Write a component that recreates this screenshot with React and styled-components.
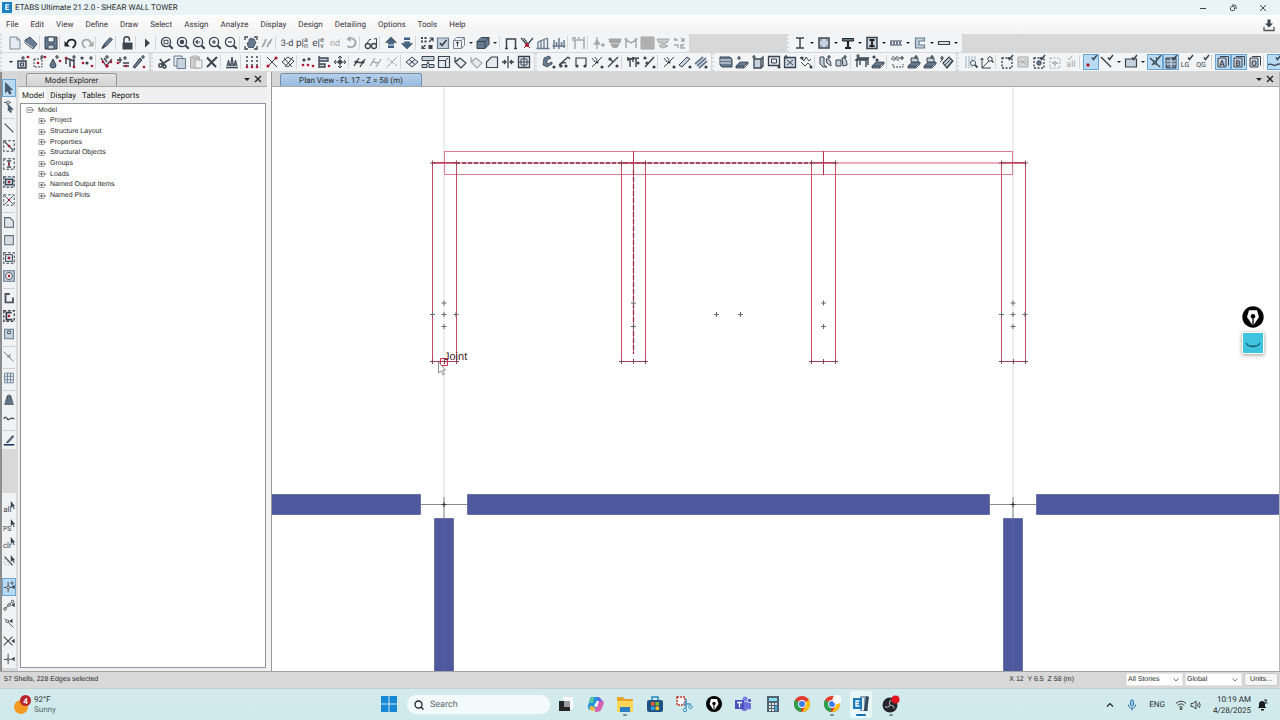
import React from "react";
import styled, { createGlobalStyle, css } from "styled-components";

const ui = `Roboto, "Noto Sans", sans-serif`;
const classic = `"Liberation Sans", Arial, sans-serif`;

const GlobalStyle = createGlobalStyle`
  *, *::before, *::after { box-sizing: border-box; }
  body { margin: 0; background: #d8d8d8; color: #2b2b2b; font-family: ${ui}; font-size: 8px; text-rendering: geometricPrecision; }
  button, select, input { font: inherit; color: inherit; margin: 0; text-rendering: inherit; }
  button { border: 0; padding: 0; background: none; }
`;

/* ---------- icon drawings, all on a 16 x 16 grid ---------- */

const INK = "#3b4550";
const STEEL = "#667b91";
const PALE = "#c6d2de";
const RED = "#b01830";

const tick = <path d="M9 3.5l1.500 2L14 1" stroke={INK} strokeWidth="1.500" />;
const plus = (x, y) => <path d={`M${x - 2} ${y}h4M${x} ${y - 2}v4`} stroke={INK} strokeWidth="1.200" />;
const dot = (x, y, r = 1.3, c = RED) => <circle cx={x} cy={y} r={r} fill={c} stroke="none" />;
const knob = (x, y) => <circle cx={x} cy={y} r="1.600" fill={INK} stroke="none" />;
const word = (t, size = 8, x = 8, y = 11) => (
  <text x={x} y={y} fontSize={size} textAnchor="middle" fill="currentColor" stroke="none" fontFamily={ui}>{t}</text>
);
const lens = (inner) => (
  <>
    <circle cx="7" cy="7" r="4.600" fill="#f2f5f8" strokeWidth="1.300" />
    <path d="M10.500 10.500l3.200 3.200" strokeWidth="2.200" />
    {inner}
  </>
);
const page = (l) => (
  <>
    <path d="M3 4h8v9H3z" fill={PALE} strokeWidth="1" stroke={INK} />
    <path d="M5 2.500h8.500v9" strokeWidth="1" stroke={INK} />
    <text x="7" y="11.500" fontSize="8" fontWeight="700" textAnchor="middle" fill={INK} stroke="none" fontFamily={ui}>{l}</text>
  </>
);
const arrowHead = <path d="M10 1v8l2-1.500 1.500 3 1-.5-1.500-3h2z" fill={INK} stroke="none" />;
const ball = <path d="M10.500 8l4-2.500v5z" fill={INK} stroke="none" />;
const slab = <path d="M2 12l4-4h8l-4 4zM2 12v2h8v-2M10 14l4-4V8" fill={STEEL} strokeWidth=".8" />;

const ICONS = {
  newFile: <path d="M3 2h7l3 3v9H3zM10 2v3h3" fill="#e4ebf2" stroke="#7f8c99" />,
  open: <><path d="M2 5l5-3 7 7-4 5-8-6z" fill={STEEL} strokeWidth=".8" /><path d="M2 7l8 6" stroke="#eee" strokeWidth=".8" /></>,
  save: <><path d="M2 2h12v12H2z" fill={STEEL} /><path d="M5 2h6v5H5z" fill="#eef2f5" /><path d="M5 10h6v4H5z" fill={PALE} /></>,
  undo: <><path d="M4 9c1-6 9-5.500 8.500-.5 0 2.500-2 3.500-3 4.500" strokeWidth="1.800" stroke="#222" /><path d="M1.500 6v5.500H7z" fill="#222" stroke="none" /></>,
  redo: <><path d="M12 9c-1-6-9-5.500-8.500-.5 0 2.500 2 3.500 3 4.500" strokeWidth="1.800" /><path d="M14.500 6v5.500H9z" fill="currentColor" stroke="none" /></>,
  pen: <><path d="M3 13.500l2-4.500 6-6.500 2.500 2-6 6.500z" fill={STEEL} strokeWidth=".8" /><path d="M3 13.500l3-3.500" strokeWidth="1.800" /></>,
  lock: <><rect x="4" y="8" width="9" height="6" fill="currentColor" /><path d="M5 8V4.500a2.700 2.700 0 0 1 5.400 0V6" strokeWidth="1.500" /></>,
  play: <path d="M6 3.500l5 4.500-5 4.500z" fill="currentColor" stroke="none" />,
  zoomBox: lens(<path d="M5 5.300h4v3.400H5z" strokeWidth="1" />),
  zoomAll: lens(<circle cx="7" cy="7" r="2.200" fill={INK} stroke="none" />),
  zoomBack: lens(<path d="M9.300 7h-4M6.700 5.200L5 7l1.700 1.800" strokeWidth="1.200" />),
  zoomIn: lens(<path d="M5 7h4M7 5v4" strokeWidth="1.200" />),
  zoomOut: lens(<path d="M5 7h4" strokeWidth="1.200" />),
  hand: <><path d="M2 5V2h3M11 2h3v3M14 11v3h-3M5 14H2v-3" strokeWidth="1.300" /><path d="M4 8l1.500 4.500h5L13 7l-1.300-.8V4.500h-1.400V3.800H9V3.300H7.500v1H6v3z" fill={STEEL} strokeWidth=".8" /></>,
  strides: <path d="M3 12l2-3 2-5M8 12l2-4 3-4M4 9h2M9 8h3" strokeWidth="1.700" />,
  t3d: word("3-d", 9),
  plan: <>{word("p|", 10, 5)}{word("a", 7, 11, 7)}{word("n", 7, 11, 13)}</>,
  elev: <>{word("e|", 10, 5)}{word("e", 7, 11, 7)}{word("v", 7, 11, 13)}</>,
  nd: word("nd", 9),
  rotate: <><path d="M6 4c4-2 7 1 6.500 4.500C12 12 7 13.500 4.500 11" strokeWidth="1.800" /><path d="M7.500 1v6L3.500 4z" fill="currentColor" stroke="none" /></>,
  glasses: <><circle cx="4.800" cy="11" r="2.500" strokeWidth="1.300" /><circle cx="11" cy="11" r="2.500" strokeWidth="1.300" /><path d="M2.500 10L7 4M13.500 10V3.500L11 4M7 4l1 1M7 10.500h2" /></>,
  up: <><path d="M8 2l5.500 5.500h-11z" fill="#3f6183" strokeWidth=".6" /><path d="M5 8h6v1.500H5zM5 10.500h6V13H5z" fill="#3f6183" stroke="none" /></>,
  down: <><path d="M8 14L2.500 8.500h11z" fill="#3f6183" strokeWidth=".6" /><path d="M5 6.500h6V8H5zM5 2.500h6V5H5z" fill="#3f6183" stroke="none" /></>,
  swap: <><path d="M2 2h2v2H2zM5.500 2h2v2h-2zM2 5.500h2v2H2zM5.500 5.500h2v2h-2zM9.500 10h4v4h-4z" fill={INK} stroke="none" /><path d="M10 7l4-4M10.500 3H14v3.500M3 13.500l3.500-3.500M3 10.500v3h3.500" strokeWidth="1.200" /></>,
  checkBox: <><path d="M2.500 3h11v10.500h-11z" fill={PALE} strokeWidth="1.200" stroke={STEEL} /><path d="M5 8l2 2.500L11.500 5" strokeWidth="1.700" /></>,
  cube: <><path d="M2.500 5.500h8v8h-8zM2.500 5.500l3-3h8l-3 3M13.500 2.500v8l-3 3" fill="#edf1f5" stroke="#778391" /><path d="M6.500 7v4.500M5 8l1.500-1L8 8" stroke={INK} /></>,
  solid: <path d="M2 6.500l4-4h8v7l-4 4H2zM2 6.500h8v7M10 6.500l4-4" fill={STEEL} />,
  portal: <path d="M3.500 13.500V4h9v9.500M2 13.500h3M11 13.500h3" strokeWidth="1.500" />,
  vee: <><path d="M2 3l6 7 6-7M4.500 3l4 5" strokeWidth="1.200" />{dot(8, 10, 2)}<path d="M5 13l3-3 3 3" stroke={RED} /></>,
  bars: <path d="M1.500 13.500h13M3 13V7M6 13V5M9 13V4M12.500 13V3M3 7l9.500-4" stroke={STEEL} strokeWidth="1.300" />,
  bars2: <path d="M1.500 11h13M3 14V5M5.500 12V7M8 14V3M10.500 12V7M13 13V5" stroke={STEEL} strokeWidth="1.500" />,
  portal2: <path d="M4 14V5h9v9M2 3h3M2 2v4M8 2v2M13 2v2" strokeWidth="1.500" />,
  addDown: <path d="M6 2v12M3.500 9L6 5l2.500 4zM10 10h4M12 8v4" strokeWidth="1.300" />,
  layers: <path d="M2 4h12l-1 4H3zM4 9.500h8l-2 3H6z" fill="currentColor" />,
  em: <path d="M3 13V5l5 3 5-3v8M1.500 4h3M11.500 4h3" strokeWidth="1.500" />,
  grayBox: <><path d="M2 2h13v12H2z" fill="#b4b4b4" /><path d="M5 5h3v3H5zM10 5h2M10 8h2M5 11h7" /></>,
  flag: <path d="M2 4h12l-2 4H4zM4 11l4-2 5 2-5 2z" fill="#c9c9c9" />,
  shuffle: <path d="M3 5h4M3 5l2-2M3 10h4v3M10 3l3 3M13 3v3h-3M10 12l3-3M10 9v4h4" strokeWidth="1.300" />,
  ibeam: <path d="M4 3h8M4 13h8M8 3v10" strokeWidth="1.500" />,
  colSq: <><path d="M3 3h10v10H3z" fill={PALE} strokeWidth="1.500" />{[[5, 5], [11, 5], [5, 11], [11, 11]].map(([x, y]) => <circle key={`${x}${y}`} cx={x} cy={y} r=".7" fill={INK} stroke="none" />)}</>,
  tee: <><path d="M2.500 3.500h11v2.500h-11z" fill={STEEL} stroke="#222" /><path d="M8 6v7M5 13h6" strokeWidth="2.200" stroke="#222" /></>,
  encased: <><path d="M3 2.500h10v11H3z" fill={PALE} strokeWidth="1.500" /><path d="M5.500 5h5M5.500 11h5M8 5v6" strokeWidth="1.800" stroke="#222" /></>,
  deck: <><path d="M2 6h12M2 10h12" strokeWidth="1" /><path d="M2 8h12" strokeWidth="3" strokeDasharray="2 1" stroke={STEEL} /></>,
  channel: <path d="M12.500 3h-9v10h9v-3H7V6h5.500z" fill={PALE} stroke={STEEL} strokeWidth="1.200" />,
  plate: <path d="M2.500 6.500h11v3h-11z" fill="#dbe1e6" strokeWidth="1.200" />,

  jointBox: <><path d="M3 7h8v7H3z" fill={PALE} strokeWidth="1.500" /><path d="M5.500 9h3v3h-3z" />{plus(8, 4)}{dot(13, 3)}</>,
  jointRect: <><path d="M3 5h8v8H3z" strokeDasharray="2 1" />{plus(11, 3)}{dot(7, 9)}{dot(14, 3)}</>,
  drop: <><path d="M6 5l3 6a3 3 0 1 1-6 0z" fill={STEEL} />{plus(10, 3)}{dot(13, 7)}</>,
  piers: <><path d="M3 4v6M7 6v7M11 5v8M3 4l8 3" strokeWidth="1.500" />{dot(3, 4)}{dot(11, 13)}{plus(11, 3)}</>,
  dots: <>{knob(3, 4)}{knob(8, 9)}{plus(12, 4)}{dot(13, 12)}{dot(4, 9)}</>,
  fan: <><path d="M2 4l5 8 6-7M5 4l3 4" strokeWidth="1.300" />{plus(8, 3)}{dot(4, 8)}{dot(8, 12, 1.7)}{dot(12, 8)}</>,
  level: <><path d="M2 6h5M8 12h6M8 9h6M5 3v6" strokeWidth="1.300" />{plus(10, 4)}{dot(3, 9)}{dot(11, 12)}</>,
  brush: <><path d="M2 13L9 4l2 2-7 8z" fill={STEEL} />{plus(12, 3)}{dot(13, 13)}</>,
  cut: <><circle cx="4.500" cy="11.500" r="1.700" strokeWidth="1.500" /><circle cx="8.500" cy="12.500" r="1.500" strokeWidth="1.500" /><path d="M5.500 10.500L14 5M8.500 11L4 5" strokeWidth="1.700" /></>,
  copy: <><path d="M2 2h8v10H2z" fill="#e7edf3" stroke={STEEL} /><path d="M5 4.500h8.500v10H5z" fill={PALE} stroke={STEEL} /></>,
  paste: <><path d="M2.500 3h9v11h-9z" fill="#d0d0d0" /><path d="M5 2h4v2H5zM7 6h7v8H7z" fill="#f0f0f0" /></>,
  del: <path d="M3 3.500l9 9.500M13 3L3 13" strokeWidth="2" />,
  towers: <><path d="M3 12l1.500-6L6 12M6.500 12l1.500-9 1.500 9M10 12l1.500-6 1.500 6" fill={STEEL} /><path d="M2 13.500h12" strokeWidth="1.500" /></>,
  gridDots: <><path d="M3 2v12M8 2v12M13 2v12" strokeDasharray="2 2" strokeWidth="1.500" />{dot(3, 13)}{dot(8, 13)}{dot(13, 13)}</>,
  crossLine: <><path d="M3 3l10 10M3 13L13 3" />{dot(4, 12, 1.6)}{dot(12, 4, 1.6)}</>,
  trim: <path d="M2 8l6-5 6 4-6 6zM5 13l8-10M4 4l8 9" />,
  spread: <>{knob(4, 6)}{knob(9, 5)}{dot(3, 11)}{dot(8, 11)}{dot(13, 12)}</>,
  align: <><path d="M3 2v12M3 4h9v3H3zM3 10h6v3H3z" fill={PALE} strokeWidth="1.300" />{dot(13, 12)}</>,
  move: <><path d="M8 2v12M2 8h12M6 4l2-2 2 2M6 12l2 2 2-2M4 6L2 8l2 2M12 6l2 2-2 2" /><circle cx="8" cy="8" r="1.800" fill={INK} /></>,
  lines: <><path d="M2 12l5-8M8 13l5-8M4 8l7 1" strokeWidth="1.300" />{knob(4, 8)}{knob(11, 8)}</>,
  linesG: <path d="M2 12l5-8M8 13l5-8M4 8l7 1" strokeWidth="1.300" />,
  pctG: <path d="M3 13L13 3M3 6l2-2M11 12l2-2M6 6l4 4" />,
  quad: <path d="M2 8l6-5 6 5-6 5zM5 5.500l6 5M5 10.500l6-5" fill="#e4eaf0" />,
  split: <><path d="M2 2.500h12v4H2zM2 10.500h5v3H2zM9 10.500h5v3H9z" fill={PALE} /><path d="M8 7v2.500M6.500 8.500L8 10l1.500-1.500" /></>,
  scale: <><path d="M2.500 2.500h11v11h-11zM2.500 6.500h7v7h-7z" fill="#e4eaf0" strokeWidth="1.200" /><path d="M10 6l2-2" /></>,
  turn: <path d="M3 8l5-4 6 5-5 5zM3 3v4h3" fill="#e4eaf0" strokeWidth="1.200" />,
  chamfer: <path d="M2.500 13.500V8l5-5h6v10.500z" fill="#e4eaf0" strokeWidth="1.200" />,
  mirror: <path d="M8 2v12M2 8h4M10 8h4M4 6l2 2-2 2M12 6l-2 2 2 2" strokeWidth="1.300" />,
  mesh: <><path d="M2.500 2.500h11v11h-11z" fill="#e4eaf0" strokeWidth="1.300" /><path d="M5 5h6v6H5zM8 2v12M2 8h12" /></>,
  sec: <><path d="M3 4l5-2 2 2-4 2v4l5-2v2l-5 3-4-2z" fill={STEEL} strokeWidth=".8" />{knob(13, 13)}</>,
  bow: <><path d="M2 11l9-8M3 13c0-4 3-5 6-4M11 3l2 2" strokeWidth="1.400" />{knob(4, 12)}{knob(9, 12)}</>,
  frameRel: <><path d="M3 12V4h10v8" strokeWidth="1.200" />{knob(4, 12)}{knob(12, 12)}</>,
  lineK: <><path d="M3 13L13 3M3 4l3 4M6 3l2 3" />{knob(8, 8)}{knob(13, 13)}</>,
  lineX: <><path d="M3 13L13 3M4 4l4 4" strokeWidth="1.400" />{knob(5, 5)}{knob(12, 12)}</>,
  stand: <><path d="M2 5l12-1M5 5v8M11 5v8M3 3v4M8 3v5" strokeWidth="1.400" />{knob(13, 9)}</>,
  pct: <><path d="M4 13L13 3" strokeWidth="1.400" />{knob(4, 4)}{knob(13, 13)}{knob(6, 9)}</>,
  ruler: <><path d="M2 11l8-8 3 2-8 8z" fill={PALE} />{knob(13, 13)}</>,
  tubes: <><path d="M2 10l8-7M4 12l9-8M6 14l8-7" strokeWidth="1.800" stroke={STEEL} />{knob(13, 13)}</>,
  stack: <><path d="M2 3h10l2 2v8H4l-2-2z" fill={STEEL} /><path d="M2 6h11M2 9h11" stroke="#e8edf2" strokeWidth="1.200" /></>,
  slabAdd: <>{slab}{plus(5, 4)}</>,
  wallAdd: <><path d="M4 5h7v9H4zM11 5l2-2v9l-2 2" fill={PALE} strokeWidth="1.300" />{plus(4, 3)}</>,
  openAdd: <><path d="M2.500 2.500h11v9h-11z" fill="#e4eaf0" strokeWidth="1.300" /><path d="M5.500 5h5v4h-5z" />{knob(13, 13)}</>,
  axes: <><path d="M2.500 3.500h11v10h-11z" fill={PALE} strokeWidth="1.300" /><path d="M5 6l6 5M5 11l6-5" />{plus(4, 3)}</>,
  scribble: <><path d="M2 3l4 4 2-4 3 4 2-2M3 8l4 4 3-3 4 4" />{knob(4, 4)}{knob(13, 13)}</>,
  shells: <><path d="M2 3h4v8l3 2H5l-3-3zM8 5c4 0 5 3 5 7l-4-3z" fill={PALE} />{plus(11, 3)}</>,
  shells2: <><path d="M2 6h5v6H2zM8 4c4 0 5 3 5 7l-4 1z" fill={PALE} />{plus(11, 3)}</>,
  table: <><path d="M2 6l2-2h10l-2 2zM3 6v7M12 6v7M14 4v7M6 7v4" fill={STEEL} strokeWidth="1.400" />{plus(4, 2)}</>,
  slabDot: <>{slab}{knob(4, 3)}{knob(7, 6)}</>,
  dims: <><path d="M2 3h3v3H2zM6 3h3v3H6zM3 10v3h10v-3" strokeDasharray="2 1" />{plus(12, 4)}</>,
  slabBox: <>{slab}<path d="M5 4h7v4H5z" fill={PALE} />{plus(10, 3)}</>,
  wedge: <><path d="M5 9l6-6 4 4-6 7z" fill={PALE} strokeWidth="1.200" /><path d="M7 11l6-6M9 13l5-6" />{plus(4, 4)}<path d="M2 8l3-3" /></>,
  findHatch: <><path d="M3 2v12M6 2v12M9 2v12M12 2v4" stroke="#b9c7d5" strokeWidth="1.500" /><circle cx="10" cy="9" r="2.500" fill="#fff" /><path d="M12 11l2.500 2.500" strokeWidth="1.800" /></>,
  findAxis: <><path d="M3 4v10h9M3 14l7-7M1.500 6L3 4l1.500 2" /><circle cx="11" cy="5" r="2.200" /><path d="M12.500 6.500l2 2" strokeWidth="1.500" /></>,
  selRect: <><path d="M3 4h10v10H3z" strokeDasharray="2 1.500" strokeWidth="1.400" />{tick}</>,
  selX: <><path d="M3 3h10v10H3z" fill="#ddd" /><path d="M5 5l6 6M11 5l-6 6M3 8h3M10 8h3" /></>,
  selDot: <><path d="M3 4h10v10H3z" strokeDasharray="2 1.500" strokeWidth="1.400" /><circle cx="8" cy="9" r="2.200" fill={STEEL} />{tick}</>,
  selDotG: <><path d="M3 4h10v10H3z" strokeDasharray="2 1.500" /><path d="M5 9h2M9 9h2M8 7v5" strokeWidth="1.500" /></>,
  allTick: <>{word("all", 9, 8, 13)}<path d="M5 4l1.500 1.500L9 2" /></>,
  ptTick: <>{dot(5, 11, 1.7)}{tick}</>,
  lnTick: <><path d="M2 3l10 10" strokeWidth="1.400" />{tick}</>,
  areaTick: <><path d="M2.500 5h11v8h-11z" fill={PALE} strokeWidth="1.200" />{tick}</>,
  snapLn: <><path d="M3 4l10 9M5 11l5-5" strokeWidth="1.300" /><circle cx="8" cy="8.500" r="1.700" fill={STEEL} />{tick}</>,
  snapGrid: <><path d="M3 4h10v10H3z" fill={STEEL} /><path d="M3 7h10M3 10h10M8 4v10" stroke="#dce8f2" />{tick}</>,
  lg: <>{word("LG", 7, 6, 13)}{tick}</>,
  qg: <>{word("QG", 7, 6, 13)}{tick}</>,
  a: page("A"), b: page("B"), o: page("O"),
  wave: <><path d="M1 11c3-3 5 2 8 0s4-1 6 0" strokeWidth="1.400" />{tick}</>,

  pointer: <path d="M4 2l8 8H8.500l2 4-2 1-2-4L4 13z" fill="#4b6078" strokeWidth=".8" />,
  reshape: <><path d="M2 4h8M6 4v3" /><circle cx="7" cy="4" r="1.600" fill="#fff" /><path d="M7 6l6 6h-3l1 3-1.500.5L8 12.500 7 14z" fill="#4b6078" strokeWidth=".5" /></>,
  line: <path d="M3 3l10 10" strokeWidth="1.300" />,
  rLine: <><path d="M2 2h12v12H2z" strokeDasharray="3 2" strokeWidth="1.200" /><path d="M3 3l10 10" strokeWidth="1.500" />{dot(8, 8, 1.5)}</>,
  rCol: <><path d="M2 2h12v12H2z" strokeDasharray="3 2" strokeWidth="1.200" /><path d="M5.500 4.500h5M5.500 11.500h5M8 4.500v7" strokeWidth="1.500" />{dot(8, 8)}</>,
  rBeams: <><path d="M2 2h12v12H2z" fill={PALE} strokeDasharray="3 2" strokeWidth="1.300" /><path d="M4 4v8M12 4v8M4 5h8M4 11h8" strokeWidth="1.500" />{dot(8, 8, 1.5)}</>,
  rBrace: <><path d="M2 2h12v12H2z" strokeDasharray="3 2" /><path d="M3 3l10 10M13 3L3 13" />{dot(8, 8)}</>,
  poly: <path d="M3 3h6l4 4v7H3z" fill="#dfe5ea" stroke="#55616d" strokeWidth="1.200" />,
  rect: <path d="M3 3h10v10.500H3z" fill="#d4dce4" stroke="#66727f" strokeWidth="1.200" />,
  areaPt: <><path d="M2 2h12v12H2z" strokeDasharray="3 2" strokeWidth="1.200" /><path d="M4 4h8v8H4z" fill={PALE} />{dot(8, 8, 1.5)}</>,
  circlePt: <><path d="M2 2h12v12H2z" fill={PALE} stroke={STEEL} strokeWidth="1.300" /><circle cx="8" cy="8" r="4" fill="#f2f5f8" />{dot(8, 8, 1.5)}</>,
  wallL: <path d="M9 3.500H4v9.500h8.500V7.500" stroke="#4c5560" strokeWidth="2.200" />,
  wallPt: <><path d="M2 2h12v12H2z" strokeDasharray="3 2" strokeWidth="1.500" /><path d="M11 4H5v8h7" strokeWidth="2" />{dot(8, 8, 1.5)}</>,
  door: <><path d="M3 2.500h10v11H3z" fill={PALE} stroke={STEEL} strokeWidth="1.200" /><path d="M6.500 4.500h3v3h-3z" fill="#eef2f5" /></>,
  link: <><path d="M2 3l11 11M6 9l4-3" stroke="#5e6874" /><circle cx="8" cy="8.500" r="1.600" fill="#8b97a3" stroke="none" /></>,
  gridBox: <path d="M3 2.500h10v11H3zM6.300 2.500v11M9.700 2.500v11M3 6h10M3 10h10" fill="#e9eef3" stroke={STEEL} />,
  tower: <path d="M6 3h4l3 10H3zM8 1.500v12M6.500 3L5.500 13M9.500 3l1 10" fill="#7b93a9" strokeWidth=".8" />,
  squiggle: <path d="M2 9c2-3 3-2 4 0s3 0 4-.5 2-.5 4 .5" strokeWidth="1.400" />,
  sketch: <><path d="M5 11l7-8 1.500 1-6.500 7z" fill={STEEL} /><path d="M2 13.500h12" strokeWidth="1.800" stroke="#203a66" /></>,
  all: <>{word("all", 9, 6, 14)}{arrowHead}</>,
  ps: <>{word("PS", 8, 6, 15)}{arrowHead}</>,
  clr: <>{word("clr", 9, 6, 14)}{arrowHead}</>,
  deselect: <><path d="M3 3l9 10" strokeWidth="1.500" /><path d="M2 6h5M2 9h7M3 12h6" stroke="#8ea6c2" strokeDasharray="1 1" />{arrowHead}</>,
  snapPt: <><path d="M7 2v12M2 8.500h9" /><circle cx="7" cy="8.500" r="1.500" fill="#fff" /><circle cx="11.500" cy="3.500" r="1.300" />{ball}</>,
  snapEnd: <><path d="M3 13l9-9" /><circle cx="3.500" cy="12.500" r="1.500" fill="#fff" /><circle cx="8" cy="8" r="1.500" fill="#fff" /><circle cx="12" cy="4" r="1.500" fill="#fff" />{ball}</>,
  snapMid: <><path d="M3 3l10 10" /><circle cx="6" cy="6" r="1.500" fill="#fff" /><path d="M8 6l4-3v5z" fill={INK} stroke="none" /></>,
  snapX: <><path d="M2 3l10 10M12 3L2 13" strokeWidth="1.200" />{ball}</>,
  snapPerp: <><path d="M7 2v12M2 8.500h9" /><circle cx="7" cy="8.500" r="1.200" fill="#fff" />{ball}</>,
};

const Glyph = styled.svg`
  display: block;
  width: 16px;
  height: 16px;
  fill: none;
  stroke: currentColor;
  overflow: hidden;
`;
const Icon = ({ name }) => <Glyph viewBox="0 0 16 16" aria-hidden="true">{ICONS[name]}</Glyph>;

/* ---------- shell ---------- */

const Shell = styled.div`
  min-height: 100vh;
  display: flex;
  flex-direction: column;
`;
const TitleBar = styled.header`
  height: 15px;
  display: flex;
  align-items: center;
  gap: 3px;
  padding-left: 2px;
  background: #eaf3f6;
`;
const AppLogo = styled.span`
  width: 10px;
  height: 11px;
  background: #1c82c4;
  color: #fff;
  font-weight: 700;
  line-height: 11px;
  text-align: center;
`;
const Title = styled.h1`
  flex: 1;
  margin: 0;
  font-size: 8px;
  font-weight: 400;
`;
const WindowButtons = styled.div`
  display: flex;
  gap: 14px;
  padding-right: 9px;
  color: #333;
`;
const MenuBar = styled.nav`
  height: 19px;
  display: flex;
  align-items: center;
  gap: 12px;
  padding: 0 3px 0 6px;
  background: linear-gradient(#fdfdfd, #f3f3f3);
`;
const MenuItem = styled.button`
  color: #3b3340;
`;
const Spacer = styled.span`
  flex: 1;
`;

const ToolRow = styled.div`
  height: 19px;
  display: flex;
  align-items: flex-start;
  overflow: hidden;
`;
const Strip = styled.div`
  display: flex;
  flex: none;
  align-items: center;
  height: 18px;
  padding: 0 2px 0 ${(p) => p.$lead}px;
  margin-left: ${(p) => p.$gap || 0}px;
  background: #f3f4f5;
  border-left: 2px dotted #dcdcdc;
  border-radius: 0 2px 2px 0;
`;
const Tool = styled.button`
  flex: none;
  display: grid;
  place-items: center;
  width: 16px;
  height: ${(p) => (p.$tall ? 18 : 16)}px;
  color: ${(p) => (p.$off ? "#a6a6a6" : INK)};
  ${(p) => p.$on && css`
    background: #b9daf3;
    outline: 1px solid #6aa5d3;
    outline-offset: -1px;
  `}
`;
const Rule = styled.span`
  flex: none;
  width: 4px;
  height: 14px;
  border-left: 1px solid #d6d6d6;
`;
const Drop = styled.button`
  flex: none;
  width: 8px;
  height: 16px;
  display: grid;
  place-items: center;
  &::after {
    content: "";
    border: ${(p) => (p.$big ? 3 : 2)}px solid transparent;
    border-top-color: #222;
    border-bottom: 0;
  }
`;

/* "|" separator, "v" drop-down arrow, "-" prefix disabled, "+" prefix pressed */
const Tools = ({ items, tall }) =>
  items.split(" ").map((t, i) => {
    if (t === "|") return <Rule key={i} />;
    if (t === "v") return <Drop key={i} aria-label="More" />;
    const name = t.replace(/^[-+]/, "");
    return (
      <Tool key={i} aria-label={name} $off={t[0] === "-"} $on={t[0] === "+"} $tall={tall}>
        <Icon name={name} />
      </Tool>
    );
  });

/* ---------- work area ---------- */

const Work = styled.main`
  flex: 1;
  display: flex;
`;
const SideBar = styled.aside`
  width: 16px;
  flex: none;
  border-left: 2px solid #8d8d8d;
  padding-top: 7px;
  background: #d8d8d8;
`;
const SideGroup = styled.div`
  display: flex;
  flex-direction: column;
  align-items: center;
  margin-bottom: ${(p) => p.$after || 0}px;
  padding-top: ${(p) => p.$lead || 0}px;
  background: #f1f2f3;
  ${Tool} { width: 14px; }
  ${Glyph} { width: 14px; height: 14px; }
  ${Rule} { width: 12px; height: 4px; border-left: 0; border-bottom: 1px solid #d0d0d0; }
`;
const Panel = styled.section`
  width: 253px;
  flex: none;
  display: flex;
  flex-direction: column;
  margin-left: 2px;
  border-right: 4px solid #f3f3f3;
`;
const PanelHead = styled.div`
  height: 15px;
  flex: none;
  display: flex;
  align-items: flex-end;
  padding: 0 4px 0 8px;
  border-bottom: 1px solid #a9a9a9;
  background: #d6d6d6;
`;
const DocTab = styled.button`
  width: ${(p) => p.$width}px;
  height: 13px;
  border: 1px solid ${(p) => (p.$blue ? "#7590ac" : "#999")};
  border-bottom: 0;
  border-radius: 3px 3px 0 0;
  background: ${(p) => (p.$blue ? "linear-gradient(#b5d0ea, #97bbdf)" : "linear-gradient(#e4e4e4, #d3d3d3)")};
  line-height: 11px;
`;
const HeadTools = styled.div`
  display: flex;
  align-items: center;
  gap: 2px;
  height: 14px;
  margin-left: auto;
`;
const Close = styled.button`
  width: 10px;
  height: 12px;
  display: grid;
  place-items: center;
  svg { width: 8px; height: 8px; }
`;
const PanelBody = styled.div`
  flex: 1;
  display: flex;
  flex-direction: column;
  padding: 1px 1px 3px 2px;
  background: #efefef;
`;
const SubTabs = styled.div`
  height: 15px;
  display: flex;
`;
const SubTab = styled.button`
  padding: 0 2px;
  margin-right: 2px;
  color: #222;
  line-height: ${(p) => (p.$on ? 12 : 15)}px;
  background: ${(p) => (p.$on ? "#fbfbfb" : "none")};
`;
const TreeBox = styled.div`
  flex: 1;
  background: #fff;
  border: 1px solid #8f949a;
`;
const Tree = styled.ul`
  height: 96px;
  margin: 1px 0 0;
  padding: 0 0 0 5px;
  display: grid;
  grid-auto-rows: 1fr;
  list-style: none;
  font-family: ${classic};
  font-size: 7px;
`;
const Node = styled.li`
  display: flex;
  align-items: center;
  gap: 4px;
  padding-left: ${(p) => (p.$child ? 12 : 0)}px;
  svg { width: 8px; height: 8px; flex: none; }
`;

const View = styled.section`
  flex: 1;
  min-width: 0;
  display: flex;
  flex-direction: column;
  border-left: 1px solid #9a9a9a;
  border-right: 1px solid #b5b5b5;
`;
const Canvas = styled.div`
  flex: 1;
  min-height: 400px;
  position: relative;
  display: flex;
  background: #fff;
`;
const Drawing = styled.svg`
  flex: 1;
  min-width: 0;
  width: 100%;
  height: 0;
  min-height: 100%;
  font-family: ${classic};
`;
const Floaters = styled.div`
  position: absolute;
  top: 218px;
  right: 14px;
  display: grid;
  gap: 3px;
  svg { display: block; width: 24px; height: 24px; }
`;
const FaceTile = styled.button`
  margin: 0 1px;
  border: 1px solid #fff;
  background: #3fc4e0;
  box-shadow: 0 1px 4px #0006;
  svg { width: 20px; height: 20px; }
`;

/* ---------- status bar and taskbar ---------- */

const StatusBar = styled.footer`
  height: 17px;
  flex: none;
  display: flex;
  align-items: flex-start;
  gap: 2px;
  padding: 1px 2px 0 4px;
  border-top: 1px solid #a2a2a2;
  background: #d8d8d8;
  font-family: ${classic};
  font-size: 7px;
`;
const StatusText = styled.span`
  line-height: 13px;
  white-space: pre;
`;
const Coords = styled(StatusText)`
  margin-left: auto;
  margin-right: 50px;
`;
const SelectWrap = styled.label`
  display: grid;
  width: 57px;
  height: 13px;
  background: #fff;
  border: 1px solid #e6e6e6;
  align-items: center;
  > * { grid-area: 1 / 1; }
  select { appearance: none; border: 0; padding: 0 0 0 1px; background: none; width: 100%; height: 11px; line-height: 11px; }
  svg { justify-self: end; margin-right: 3px; width: 6px; height: 6px; pointer-events: none; }
`;
const UnitsButton = styled.button`
  width: 34px;
  height: 13px;
  background: #f6f6f6;
  border: 1px solid #c8c8c8;
  border-radius: 2px;
`;

const Taskbar = styled.footer`
  height: 32px;
  flex: none;
  display: grid;
  grid-template-columns: 1fr auto 1fr;
  align-items: center;
  background: linear-gradient(#d3eaed, #cfeaec);
  border-top: 1px solid #c3cfd1;
`;
const Weather = styled.button`
  display: flex;
  align-items: center;
  gap: 3px;
  padding-left: 13px;
  text-align: left;
  line-height: 10px;
  svg { width: 18px; height: 20px; }
  small { display: block; font-size: 8px; color: #5c6a6c; }
`;
const Centre = styled.div`
  display: flex;
  align-items: center;
`;
const SearchBox = styled.label`
  width: 145px;
  height: 21px;
  margin: 0 4px 0 6px;
  padding: 0 7px;
  display: flex;
  align-items: center;
  gap: 6px;
  border-radius: 11px;
  background: #f2fafb;
  border: 1px solid #dbeaec;
  svg { width: 10px; height: 10px; flex: none; }
  input { width: 100%; border: 0; padding: 0; background: none; outline: 0; font-size: 9px; }
  input::placeholder { color: #5d6668; opacity: 1; }
`;
const Apps = styled.div`
  width: 347px;
  display: flex;
  justify-content: space-between;
`;
const TaskButton = styled.button`
  width: 22px;
  height: 27px;
  padding-top: 2px;
  display: flex;
  flex-direction: column;
  align-items: center;
  justify-content: center;
  gap: 1px;
  border-radius: 3px;
  background: ${(p) => (p.$active ? "#eaf7f9" : "none")};
  svg { width: 18px; height: 18px; flex: none; }
  &::after {
    content: "";
    height: 2px;
    border-radius: 1px;
    width: ${(p) => (p.$active ? 10 : 4)}px;
    background: ${(p) => (p.$active ? "#1470b0" : p.$running ? "#7c898b" : "transparent")};
  }
`;
const Tray = styled.div`
  display: flex;
  align-items: center;
  justify-content: flex-end;
  padding-right: 12px;
`;
const TrayButton = styled.button`
  display: flex;
  gap: 3px;
  margin-right: ${(p) => p.$after}px;
  line-height: 11px;
  text-align: right;
  svg { width: 12px; height: 12px; }
`;

const chrome = (
  <>
    <circle cx="9" cy="9" r="8" fill="#e33b2e" />
    <path d="M9 9L2.100 5A8 8 0 0 0 8 17z" fill="#2da04d" />
    <path d="M9 9l7-4a8 8 0 0 1-7 12l3-5z" fill="#fbc116" />
    <circle cx="9" cy="9" r="3.900" fill="#fff" />
    <circle cx="9" cy="9" r="3" fill="#3b7de0" />
  </>
);
const nib = (
  <>
    <circle cx="9" cy="9" r="8" fill="#000" />
    <path d="M6 4h6l1.500 5L9.500 15h-1l-4-6z" fill="#fff" />
    <path d="M9 15V9" stroke="#000" />
    <circle cx="9" cy="8.500" r="1.700" fill="#000" />
  </>
);
const APPS = [
  ["Task view", <><path d="M6 2h10v12H6z" fill="#f7f7f7" /><path d="M2 6h5v6h6v4H2z" fill="#262626" /><path d="M7 6h6v6H7z" fill="#9b9fa1" /></>],
  ["Copilot", <><path d="M5 2h6c2 0 2 3 1 5l-2 5c-1 3-5 3-7 3-3-1-2-5-1-8s1-5 3-5z" fill="#2793dc" /><path d="M2 8h4l1-5C8 1 3 1 3 5z" fill="#54c6a1" /><path d="M8 15l3-9c1-2 6-1 6 2l-2 5c-1 3-3 4-7 4z" fill="#d965b0" /><path d="M3 11l5 1-1 4c-3 0-5-1-4-5z" fill="#f5b83f" /><path d="M7 11l3-5h2l-2 6z" fill="#fff" /><path d="M11 2c3 0 3 4 5 4l-4 1z" fill="#6c5ce0" /></>],
  ["File Explorer", <><path d="M1 2h6l2 2h8v5H1z" fill="#e5a52c" /><path d="M1 6h16v11H1z" fill="#ffd65a" /><path d="M4 12h10v5H4z" fill="#2a7fc6" /></>, "run"],
  ["Store", <><path d="M6 5V2h6v3" fill="none" stroke="#2a86b8" strokeWidth="1.500" /><rect x="1" y="5" width="16" height="12" rx="2" fill="#1d5282" /><path d="M5 7h3.500v3.500H5z" fill="#f15a2b" /><path d="M9.500 7H13v3.500H9.500z" fill="#7fba2c" /><path d="M5 11.500h3.500V15H5z" fill="#28a5e8" /><path d="M9.500 11.500H13V15H9.500z" fill="#fdbb2d" /></>],
  ["Snipping Tool", <><path d="M2 2h8v8H2z" fill="#fff" stroke="#c8392c" strokeWidth="1.500" strokeDasharray="2 1" /><path d="M11 4v9M16 9H8" stroke="#4a98c5" strokeWidth="1.600" /><circle cx="10" cy="15" r="1.700" fill="none" stroke="#3991c4" /><circle cx="15.500" cy="12" r="1.700" fill="none" stroke="#3991c4" /></>],
  ["Pen", nib],
  ["Teams", <><circle cx="11" cy="4" r="2.500" fill="#7b83eb" /><circle cx="15.500" cy="5.500" r="1.700" fill="#5059c9" /><path d="M7 7h7v6c0 4-7 4-7 0zM14 8h3v5c0 2-3 2-3 0z" fill="#6b73d8" /><rect x="1" y="5" width="9" height="9" fill="#4b53bc" /><path d="M3 7.500h5M5.500 7.500v5" stroke="#fff" strokeWidth="1.300" /></>],
  ["Calculator", <><rect x="3" y="1" width="12" height="16" fill="#52636f" /><path d="M5 3h8v3H5z" fill="#87dff5" /><path d="M5 8h2v2H5zM8 8h2v2H8zM11 8h2v2h-2zM5 11h2v2H5zM8 11h2v2H8zM5 14h2v2H5zM8 14h2v2H8z" fill="#dfe7eb" /><path d="M11 11h2v5h-2z" fill="#3da9e0" /></>],
  ["Chrome", chrome],
  ["Chrome profile", <>{chrome}<circle cx="14" cy="4.500" r="4.500" fill="#fff" /></>, "run"],
  ["ETABS", <><path d="M8 1h8v15H8z" fill="#8ba3b5" /><path d="M14 1l3 1-2 14h-3z" fill="#32485a" /><path d="M10 3h2v12h-2z" fill="#e8eff3" /><rect x="1" y="3" width="9" height="11" fill="#1b79bd" /><path d="M7.500 6H4v5h3.500M4 8.500h3" fill="none" stroke="#fff" strokeWidth="1.300" /></>, "active"],
  ["OBS", <><circle cx="8" cy="10" r="7.500" fill="#23252a" /><path d="M8 10c-1-2-.5-4 1.500-5M8 10c2 0 4 1 4 3.500M8 10c-1 2-3 3-5 1.500" stroke="#a5a7ac" strokeWidth="1.200" /><circle cx="13.500" cy="4.500" r="4" fill="#e3131f" /></>, "run"],
];

/* ---------- plan drawing ---------- */

const WALLS = [432.5, 621.5, 811.5, 1001.5];
const JOINTS = [
  [444, 303], [444, 314.5], [444, 326.5], [432.5, 314.5], [456, 314.5], [633.5, 303], [633.5, 326.5],
  [716.5, 314.5], [740.5, 314.5], [823.5, 303], [823.5, 326.5], [1013, 303], [1013, 314.5], [1013, 326.5],
  [1001.5, 314.5], [1025, 314.5],
];
const cross = (x, y, c = "#6a6a6a") => <path key={`${x}-${y}`} d={`M${x - 2.5} ${y}h5M${x} ${y - 2.5}v5`} stroke={c} />;

const PlanDrawing = () => (
  <Drawing viewBox="272 87 1007 584" preserveAspectRatio="xMidYMid slice" fill="none" role="img" aria-label="Plan view">
    <path d="M444 87V518M1013 87V518" stroke="#dadcdc" />
    <g fill="#4e589f" stroke="#434b8c" strokeWidth=".6">
      <path d="M260 494.500h160.500v20H260zM467.500 494.500H989.500v20H467.500zM1036.500 494.500H1300v20h-263.500z" />
      <path d="M434.500 518.500h19V680h-19zM1003.500 518.500h19V680h-19z" />
    </g>
    <path d="M444 519V671M1013 519V671" stroke="#626da8" strokeWidth=".6" />
    <path d="M421 504.500H467M990 504.500H1036M444 497v21M1013 497v21" stroke="#8a8d8d" />
    {cross(444, 504.5, "#333")}{cross(1013, 504.5, "#333")}
    <path d="M444 151.500H1013M444 174.500H1013M444.500 151v24M1012.500 151v24" stroke="#df7f91" />
    <path d="M432 163H1025" stroke="#d95c74" />
    <path d="M633.500 151v24M823.500 151v24" stroke="#b8304c" />
    <path d="M456 163H811" stroke="#8d2743" strokeWidth="1.300" strokeDasharray="4 2" />
    <path d="M633.500 172V354" stroke="#d0607a" />
    <path d="M633.500 170V354" stroke="#9d2b48" strokeWidth="1.300" strokeDasharray="5 2" />
    {WALLS.map((x) => (
      <g key={x}>
        <path d={`M${x} 162.500h24v199h-24z`} stroke="#cb4a66" />
        <path d={`M${x} 361.500h24M${x} 163h24`} stroke="#b23c58" />
        {[x, x + 12, x + 24].map((cx) => cross(cx, 361.5, "#8e4656"))}
        {[x, x + 24].map((cx) => cross(cx, 163, "#8e4656"))}
      </g>
    ))}
    {JOINTS.map(([x, y]) => cross(x, y))}
    <path d="M440.500 358.500h7v7h-7z" stroke="#d0304c" />
    <text x="444" y="360" fontSize="11" fill="#44282d">Joint</text>
    <path d="M438.500 362v11l2.500-2 2 4 1.500-1-2-4h3z" fill="#fff" stroke="#777" strokeWidth=".8" />
  </Drawing>
);

const Cross = () => (
  <Close aria-label="Close"><svg viewBox="0 0 8 8"><path d="M1 1l6 6M7 1L1 7" stroke="#222" strokeWidth="1.300" /></svg></Close>
);
const Chevron = () => <svg viewBox="0 0 6 6" aria-hidden="true"><path d="M.5 1.500L3 4l2.500-2.500" fill="none" stroke="#555" strokeWidth=".8" /></svg>;

const TreeNode = ({ child, children }) => (
  <Node $child={child}>
    <svg viewBox="0 0 8 8" fill="none">
      <path d="M1 1.500h5v5H1z" stroke="#8b8b8b" strokeWidth=".8" />
      <path d={child ? "M2 4h3M3.500 2.500v3M6 4h2" : "M2 4h3M6 4h2"} stroke="#444" strokeWidth=".8" />
    </svg>
    {children}
  </Node>
);

const MENUS = ["File", "Edit", "View", "Define", "Draw", "Select", "Assign", "Analyze", "Display", "Design", "Detailing", "Options", "Tools", "Help"];
const BRANCHES = ["Project", "Structure Layout", "Properties", "Structural Objects", "Groups", "Loads", "Named Output Items", "Named Plots"];

export default function App() {
  return (
    <Shell>
      <GlobalStyle />
      <TitleBar>
        <AppLogo>E</AppLogo>
        <Title>ETABS Ultimate 21.2.0 - SHEAR WALL TOWER</Title>
        <WindowButtons>
          <Tool aria-label="Minimize"><Glyph viewBox="0 0 16 16"><path d="M5 8.500h6" /></Glyph></Tool>
          <Tool aria-label="Restore"><Glyph viewBox="0 0 16 16"><rect x="5.500" y="6.500" width="4" height="4" rx="1" /><path d="M7 5h2.500q1.500 0 1.500 1.500V9" /></Glyph></Tool>
          <Tool aria-label="Close"><Glyph viewBox="0 0 16 16"><path d="M5 5l6 6M11 5l-6 6" /></Glyph></Tool>
        </WindowButtons>
      </TitleBar>
      <MenuBar>
        {MENUS.map((m) => <MenuItem key={m}>{m}</MenuItem>)}
        <Spacer />
        <Tool aria-label="Download"><Glyph viewBox="0 0 16 16"><path d="M3 10v3.500h10V10" stroke="#555" strokeWidth="1.300" /><path d="M6.500 2.500h3v4H12l-4 4-4-4h2.500z" fill={INK} stroke="none" /></Glyph></Tool>
      </MenuBar>

      <ToolRow>
        <Strip $lead={5}>
          <Tools items="newFile open | save | undo -redo | pen | lock | play | zoomBox zoomAll zoomBack zoomIn zoomOut | hand -strides | t3d plan elev -nd -rotate | glasses | up down | swap checkBox cube v solid v | portal vee bars bars2 | -portal2 | -addDown -layers -em -grayBox -flag -shuffle" />
        </Strip>
        <Strip $lead={3} $gap={98}>
          <Tools items="ibeam v colSq v tee v encased v deck v channel v plate v" />
        </Strip>
      </ToolRow>
      <ToolRow>
        <Strip $lead={5}>
          <Tools items="v jointBox jointRect drop piers dots | fan level brush" />
        </Strip>
        <Strip $lead={3} $gap={2}>
          <Tools items="cut copy -paste del | towers | gridDots | crossLine trim | spread align move | lines -linesG -pctG | quad split scale turn -turn chamfer mirror mesh" />
        </Strip>
        <Strip $lead={4} $gap={1}>
          <Tools items="sec bow frameRel lineK lineX | stand pct | lineK ruler tubes" />
        </Strip>
        <Strip $lead={4} $gap={1}>
          <Tools items="stack slabAdd wallAdd openAdd axes scribble | shells shells2 | table slabDot | dims slabBox slabBox wedge" />
        </Strip>
        <Strip $lead={4} $gap={1}>
          <Tools items="findHatch findAxis | selRect -selX selDot -selDotG -allTick | +ptTick lnTick v areaTick v +snapLn +snapGrid lg qg | +a +b o | +wave" />
        </Strip>
      </ToolRow>

      <Work>
        <SideBar aria-label="Drawing tools">
          <SideGroup $after={44}>
            <Tools tall items="+pointer reshape | line rLine rCol rBeams rBrace | poly rect areaPt circlePt | wallL wallPt door | link | gridBox | tower squiggle | sketch" />
          </SideGroup>
          <SideGroup $lead={5}>
            <Tools tall items="all ps clr deselect" />
          </SideGroup>
          <SideGroup $lead={8}>
            <Tools tall items="+snapPt snapEnd snapMid snapX snapPerp" />
          </SideGroup>
        </SideBar>

        <Panel>
          <PanelHead>
            <DocTab $width={91}>Model Explorer</DocTab>
            <HeadTools><Drop $big aria-label="Panel menu" /><Cross /></HeadTools>
          </PanelHead>
          <PanelBody>
            <SubTabs>
              {["Model", "Display", "Tables", "Reports"].map((t, i) => <SubTab key={t} $on={i === 0}>{t}</SubTab>)}
            </SubTabs>
            <TreeBox>
              <Tree>
                <TreeNode>Model</TreeNode>
                {BRANCHES.map((b) => <TreeNode key={b} child>{b}</TreeNode>)}
              </Tree>
            </TreeBox>
          </PanelBody>
        </Panel>

        <View>
          <PanelHead>
            <DocTab $width={142} $blue>Plan View - FL 17 - Z = 58 (m)</DocTab>
            <HeadTools><Drop $big aria-label="View menu" /><Cross /></HeadTools>
          </PanelHead>
          <Canvas>
            <PlanDrawing />
            <Floaters>
              <button aria-label="Pen overlay"><svg viewBox="0 0 18 18">{nib}</svg></button>
              <FaceTile aria-label="Assistant"><svg viewBox="0 0 20 20" fill="none"><path d="M3 10c3 5 11 5 14 0M7 13h6" stroke="#175a6b" strokeWidth="1.200" /></svg></FaceTile>
            </Floaters>
          </Canvas>
        </View>
      </Work>

      <StatusBar>
        <StatusText>57 Shells, 228 Edges selected</StatusText>
        <Coords>X 12  Y 6.5  Z 58 (m)</Coords>
        <SelectWrap><select aria-label="Stories"><option>All Stories</option></select><Chevron /></SelectWrap>
        <SelectWrap><select aria-label="Coordinate system"><option>Global</option></select><Chevron /></SelectWrap>
        <UnitsButton>Units...</UnitsButton>
      </StatusBar>

      <Taskbar>
        <Weather>
          <svg viewBox="0 0 18 20"><circle cx="8" cy="12" r="7" fill="#f29a22" /><circle cx="12.500" cy="5.500" r="5.500" fill="#b8242a" /><text x="12.500" y="8.500" fontSize="8" fontWeight="700" textAnchor="middle" fill="#fff">4</text></svg>
          <span>92°F<small>Sunny</small></span>
        </Weather>
        <Centre>
          <TaskButton aria-label="Start"><svg viewBox="0 0 18 18"><path d="M1 1h7.500v7.500H1zM9.500 1H17v7.500H9.500zM1 9.500h7.500V17H1zM9.500 9.500H17V17H9.500z" fill="#1688d4" /></svg></TaskButton>
          <SearchBox>
            <svg viewBox="0 0 10 10" fill="none" stroke="#222" strokeWidth="1.300"><circle cx="4.500" cy="4.500" r="3.500" /><path d="M7 7l2.500 2.500" /></svg>
            <input type="text" aria-label="Search" placeholder="Search" />
          </SearchBox>
          <Apps>
            {APPS.map(([name, art, state]) => (
              <TaskButton key={name} aria-label={name} $active={state === "active"} $running={state === "run"}>
                <svg viewBox="0 0 18 18" fill="none">{art}</svg>
              </TaskButton>
            ))}
          </Apps>
        </Centre>
        <Tray>
          <TrayButton $after={10} aria-label="Hidden icons"><svg viewBox="0 0 12 12"><path d="M3 7.500l3-3 3 3" fill="none" stroke="#222" strokeWidth="1.200" /></svg></TrayButton>
          <TrayButton $after={11} aria-label="Microphone"><svg viewBox="0 0 12 12" fill="none" stroke="#2b6ea5"><rect x="4.500" y="1" width="3" height="6" rx="1.500" fill="#9cc8e6" /><path d="M2.500 5.500c0 5 7 5 7 0M6 9v2.500" /></svg></TrayButton>
          <TrayButton $after={10}>ENG</TrayButton>
          <TrayButton $after={11} aria-label="Network and volume">
            <svg viewBox="0 0 12 12" fill="none" stroke="#333"><path d="M1 4.500c3-3 7-3 10 0M2.700 6.500c2-2 4.600-2 6.600 0M4.300 8.300c1-1 2.400-1 3.400 0" /><circle cx="6" cy="9.800" r=".8" fill="#333" /></svg>
            <svg viewBox="0 0 12 12" fill="none" stroke="#333" strokeWidth=".9"><path d="M1 4.500h2L6 2v8L3 7.500H1zM7.500 4.500q1.200 1.500 0 3M9 3q2.500 3 0 6" /></svg>
          </TrayButton>
          <TrayButton $after={5}><span>10:19 AM<br />4/28/2025</span></TrayButton>
          <TrayButton $after={0} aria-label="Notifications"><svg viewBox="0 0 12 12"><path d="M2 9l1-1.500V5c0-4 6-4 6 0v2.500L10.500 9zM5 10h3v1.500H5z" fill="#1d1d1d" /><path d="M8 1h3L8.500 4h3" stroke="#1d1d1d" fill="none" /></svg></TrayButton>
        </Tray>
      </Taskbar>
    </Shell>
  );
}
